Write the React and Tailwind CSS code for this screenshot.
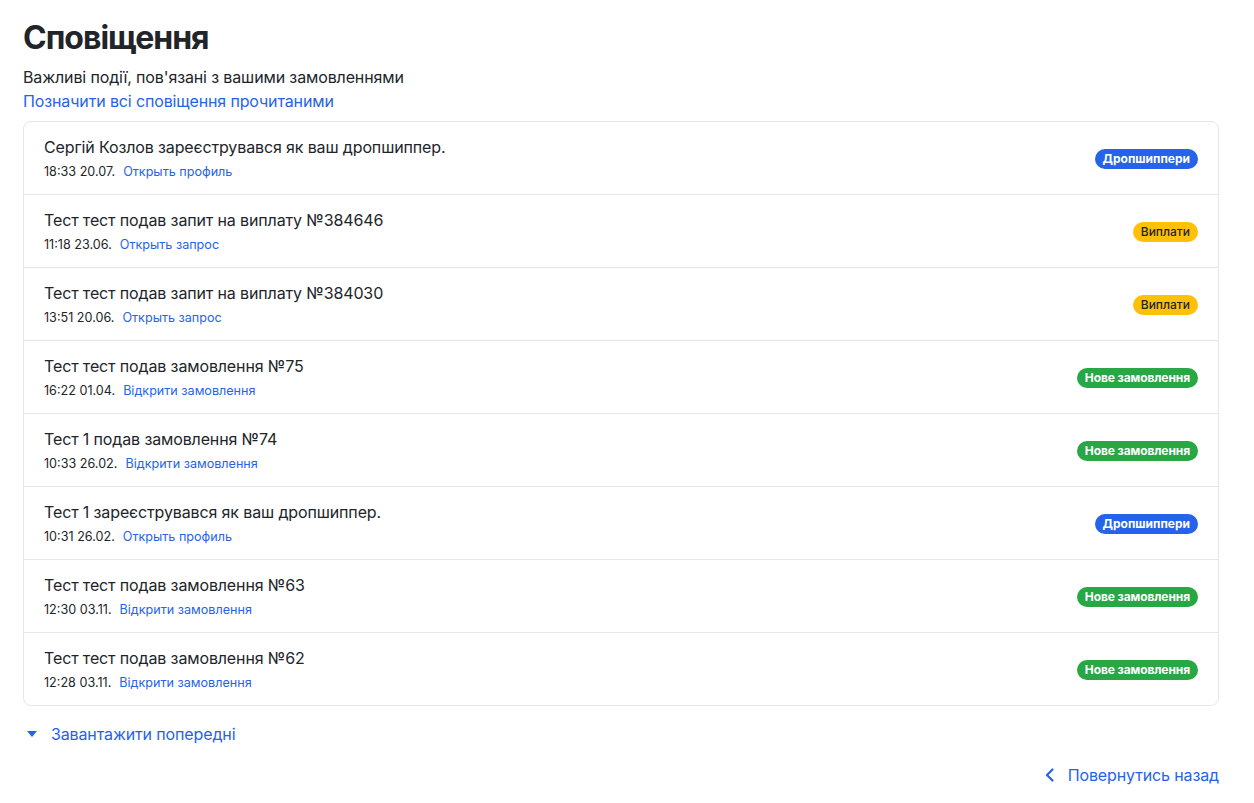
import React from "react";

const items = [
  { text: "Сергій Козлов зареєструвався як ваш дропшиппер.", time: "18:33 20.07.", link: "Открыть профиль", tag: "drop" },
  { text: "Тест тест подав запит на виплату №384646", time: "11:18 23.06.", link: "Открыть запрос", tag: "pay" },
  { text: "Тест тест подав запит на виплату №384030", time: "13:51 20.06.", link: "Открыть запрос", tag: "pay" },
  { text: "Тест тест подав замовлення №75", time: "16:22 01.04.", link: "Відкрити замовлення", tag: "order" },
  { text: "Тест 1 подав замовлення №74", time: "10:33 26.02.", link: "Відкрити замовлення", tag: "order" },
  { text: "Тест 1 зареєструвався як ваш дропшиппер.", time: "10:31 26.02.", link: "Открыть профиль", tag: "drop" },
  { text: "Тест тест подав замовлення №63", time: "12:30 03.11.", link: "Відкрити замовлення", tag: "order" },
  { text: "Тест тест подав замовлення №62", time: "12:28 03.11.", link: "Відкрити замовлення", tag: "order" },
];

function Badge({ tag }) {
  if (tag === "drop")
    return (
      <span className="mt-[1px] inline-flex h-[20px] items-center rounded-full bg-[#2563eb] px-[8px] text-[12px] font-bold leading-none text-white">
        Дропшиппери
      </span>
    );
  if (tag === "pay")
    return (
      <span className="mt-[1px] inline-flex h-[20px] items-center rounded-full bg-[#ffc107] px-[8px] text-[12px] font-medium leading-none text-[#212529]">
        Виплати
      </span>
    );
  return (
    <span className="mt-[1px] inline-flex h-[20px] items-center rounded-full bg-[#28a745] px-[8px] text-[12px] font-bold leading-none tracking-[-0.1px] text-white">
      Нове замовлення
    </span>
  );
}

export default function App() {
  return (
    <div className="min-h-[803px] bg-white pl-[23px] pr-[35px] pt-[18px] text-[#212529]" style={{ fontFamily: "Inter, 'Noto Sans', sans-serif" }}>
      <h1 className="text-[32px] font-bold leading-[40px] tracking-[-1px]">Сповіщення</h1>
      <p className="mt-[7px] text-[16px] leading-[24px] tracking-[-0.13px]">Важливі події, пов'язані з вашими замовленнями</p>
      <a href="#" className="block text-[16px] leading-[24px] tracking-[-0.13px] text-[#2563eb]">Позначити всі сповіщення прочитаними</a>

      <div className="mt-[8px] divide-y divide-[#e5e7eb] rounded-[8px] border border-[#e5e7eb]">
        {items.map((it, i) => (
          <div key={i} className="box-content flex h-[72px] items-center justify-between pl-[20px] pr-[20px]">
            <div className="flex flex-col">
              <div className="text-[16px] leading-[22px] tracking-[-0.13px]">{it.text}</div>
              <div className="mt-[6px] flex items-center gap-[8px] text-[12.6px] leading-[16px]">
                <span>{it.time}</span>
                <a href="#" className="text-[#2563eb]">{it.link}</a>
              </div>
            </div>
            <Badge tag={it.tag} />
          </div>
        ))}
      </div>

      <button className="mt-[16px] flex items-center gap-[14px] pl-[4px] text-[16px] leading-[24px] tracking-[-0.13px] text-[#2563eb]">
        <svg width="10" height="6" viewBox="0 0 10 6" fill="currentColor">
          <path d="M0 0h10L5 6z" />
        </svg>
        Завантажити попередні
      </button>

      <div className="mt-[17px] flex justify-end">
        <a href="#" className="flex items-center gap-[13px] text-[16px] leading-[24px] tracking-[-0.13px] text-[#2563eb]">
          <svg width="10" height="14" viewBox="0 0 10 14" fill="none" stroke="currentColor" strokeWidth="2.2" strokeLinecap="round" strokeLinejoin="round">
            <path d="M7.5 1.5L2 7l5.5 5.5" />
          </svg>
          Повернутись назад
        </a>
      </div>
    </div>
  );
}
